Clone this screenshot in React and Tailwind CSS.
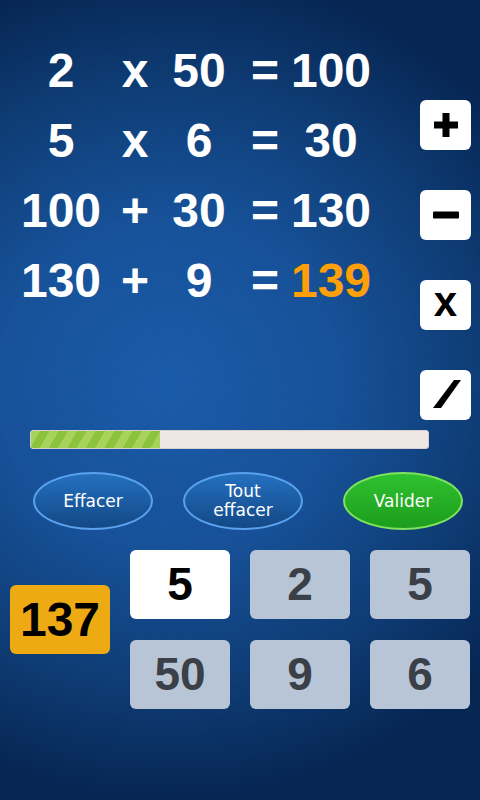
import { useState } from 'react';

const EQUATIONS = [
  ['2', 'x', '50', '=', '100'],
  ['5', 'x', '6', '=', '30'],
  ['100', '+', '30', '=', '130'],
  ['130', '+', '9', '=', '139'],
];

const TILES = [
  { value: '5', active: true },
  { value: '2' },
  { value: '5' },
  { value: '50' },
  { value: '9' },
  { value: '6' },
];

function OperatorIcon({ op }) {
  if (op === '+') {
    return (
      <svg viewBox="0 0 50 50" className="h-[50px] w-[50px]">
        <rect x="13" y="21.5" width="24" height="7" fill="#000" />
        <rect x="21.5" y="13" width="7" height="24" fill="#000" />
      </svg>
    );
  }
  if (op === '-') {
    return (
      <svg viewBox="0 0 50 50" className="h-[50px] w-[50px]">
        <rect x="12" y="21.5" width="26" height="7" rx="1" fill="#000" />
      </svg>
    );
  }
  if (op === 'x') {
    return <span className="-mt-[6px] text-[42px] font-bold leading-none text-black">x</span>;
  }
  return (
    <svg viewBox="0 0 50 50" className="h-[50px] w-[50px]">
      <polygon points="33,10 40,10 20,38 12,38" fill="#000" />
    </svg>
  );
}

export default function App() {
  const [selected] = useState(0);

  return (
    <div
      className="relative h-[800px] w-[480px] overflow-hidden bg-[radial-gradient(ellipse_90%_52%_at_35%_48%,#1b5cab_0%,#17529a_40%,#0e3b73_75%,#062654_100%)]"
      style={{ fontFamily: '"Liberation Sans", Arial, sans-serif' }}
    >
      <div className="pointer-events-none absolute inset-0 bg-[repeating-linear-gradient(135deg,rgba(0,0,0,0.03)_0px,rgba(0,0,0,0.03)_1px,transparent_1px,transparent_3px)]" />

      <div className="relative flex h-[420px]">
        <div className="grid auto-rows-[70px] grid-cols-[102px_46px_82px_50px_82px] pl-[10px] pt-[36px] text-[48px] font-bold leading-[70px] text-white">
          {EQUATIONS.map((row, rowIndex) =>
            row.map((cell, cellIndex) => (
              <div
                key={`${rowIndex}-${cellIndex}`}
                className={`text-center ${rowIndex === 3 && cellIndex === 4 ? 'text-[#ff9f0a]' : ''}`}
              >
                {cell}
              </div>
            ))
          )}
        </div>

        <div className="ml-auto mr-[9px] flex flex-col gap-[40px] pt-[100px]">
          {['+', '-', 'x', '/'].map((op) => (
            <div key={op} className="flex h-[50px] w-[51px] items-center justify-center rounded-[6px] bg-white">
              <OperatorIcon op={op} />
            </div>
          ))}
        </div>
      </div>

      <div className="relative ml-[30px] mt-[10px] flex h-[19px] w-[399px] overflow-hidden rounded-[3px] border border-[#d8d0ce] bg-[#efe7e4]">
        <div className="h-full w-[129px] bg-[repeating-linear-gradient(120deg,#a7d35a_0px,#a7d35a_8px,#8dc23c_8px,#8dc23c_16px)]" />
      </div>

      <div className="relative mt-[23px] flex">
        <button className="ml-[33px] flex h-[58px] w-[120px] items-center justify-center rounded-[50%] border-2 border-[#5aa2ee] bg-[linear-gradient(#2470bf,#134886)] text-[17px] leading-[19px] text-white" style={{ fontFamily: '"DejaVu Sans", sans-serif' }}>
          Effacer
        </button>
        <button className="ml-[30px] flex h-[58px] w-[120px] items-center justify-center rounded-[50%] border-2 border-[#5aa2ee] bg-[linear-gradient(#2470bf,#134886)] text-[17px] leading-[19px] text-white" style={{ fontFamily: '"DejaVu Sans", sans-serif' }}>
          Tout
          <br />
          effacer
        </button>
        <button className="ml-[40px] flex h-[58px] w-[120px] items-center justify-center rounded-[50%] border-2 border-[#7fe35e] bg-[linear-gradient(#2fc12f,#1d9d1d)] text-[17px] leading-[19px] text-white" style={{ fontFamily: '"DejaVu Sans", sans-serif' }}>
          Valider
        </button>
      </div>

      <div className="relative mt-[20px] flex">
        <div className="ml-[10px] mt-[35px] flex h-[69px] w-[100px] items-center justify-center rounded-[6px] bg-[#eeaa13] text-[48px] font-bold text-black">
          137
        </div>
        <div className="ml-[20px] grid grid-cols-[100px_100px_100px] gap-x-[20px] gap-y-[21px]">
          {TILES.map((tile, index) => (
            <div
              key={index}
              className={`flex h-[69px] items-center justify-center rounded-[6px] text-[46px] font-bold ${
                index === selected ? 'bg-white text-black' : 'bg-[#b8c5d6] text-[#3b3f47]'
              }`}
            >
              {tile.value}
            </div>
          ))}
        </div>
      </div>
    </div>
  );
}
